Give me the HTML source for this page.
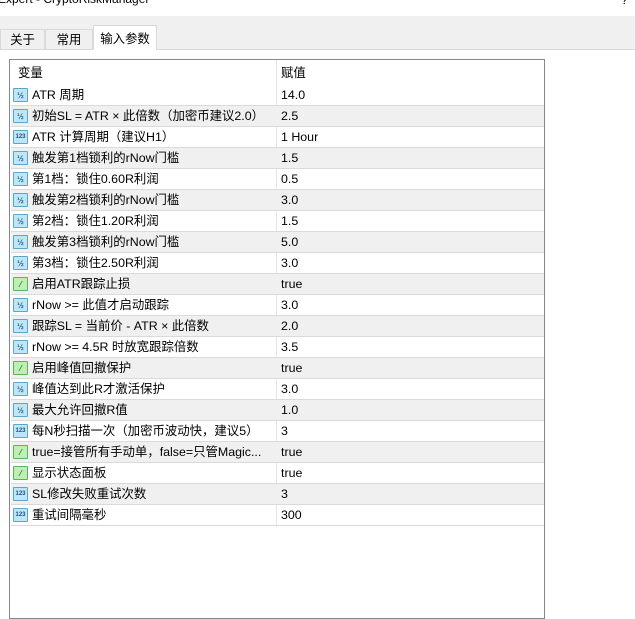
<!DOCTYPE html><html><head><meta charset="utf-8"><style>
body{margin:0;width:635px;height:610px;overflow:hidden;background:#fff;font-family:"Liberation Sans","Noto Sans CJK SC",sans-serif;font-size:12.4px;color:#000;position:relative}
.tb{position:absolute;left:0;top:16px;width:635px;height:33px;background:#f0f0f0;border-bottom:1px solid #d9d9d9}
.tab{position:absolute;top:29px;height:20px;border:1px solid #d9d9d9;border-bottom:none;background:#f0f0f0;line-height:20px;text-align:center;box-sizing:border-box}
.sel{top:25px;height:25px;background:#fff;line-height:26px}
.tbl{position:absolute;left:9px;top:59px;width:536px;height:560px;border:1px solid #828790;box-sizing:border-box}
.col{position:absolute;left:266px;top:0;width:1px;height:467px;background:#e5e5e5}
.row{position:absolute;left:1px;width:533px;height:21px;border-bottom:1px solid #dadada;box-sizing:border-box;line-height:20px}
.g{background:#f0f0f0}
.n{position:absolute;left:21px}.v{position:absolute;left:270px}
.ic{position:absolute;left:2px;top:3px;width:15px;height:14px;border-radius:1px;font-size:8px;line-height:13px;text-align:center;box-sizing:border-box;font-weight:bold}
.d{background:#bfe6f5;border:1px solid #5aa7c7;color:#1d5f8a}
.i{background:#bfe6f5;border:1px solid #5aa7c7;color:#1d4f8a;font-size:6px}
.b{background:#bfeeb5;border:1px solid #5cb25a;color:#2a7a2a}
.hd{position:absolute;left:1px;top:0;width:533px;height:25px;line-height:26px}
</style></head><body>
<div style="position:absolute;left:-2px;top:-8px;font-size:12px">Expert - CryptoRiskManager</div>
<div style="position:absolute;left:621px;top:-7px">?</div>
<div class="tb"></div>
<div class="tab" style="left:0;width:45px">关于</div>
<div class="tab" style="left:45px;width:48px">常用</div>
<div class="tab sel" style="left:93px;width:64px">输入参数</div>
<div class="tbl">
<div class="col"></div>
<div class="hd"><span style="position:absolute;left:7px">变量</span><span style="position:absolute;left:270px">赋值</span></div>
<div style="position:absolute;left:0;top:25px;width:534px">
<div class="row" style="top:0"><span class="ic d">½</span><span class="n">ATR 周期</span><span class="v">14.0</span></div>
<div class="row g" style="top:21px"><span class="ic d">½</span><span class="n">初始SL = ATR × 此倍数（加密币建议2.0）</span><span class="v">2.5</span></div>
<div class="row" style="top:42px"><span class="ic i">123</span><span class="n">ATR 计算周期（建议H1）</span><span class="v">1 Hour</span></div>
<div class="row g" style="top:63px"><span class="ic d">½</span><span class="n">触发第1档锁利的rNow门槛</span><span class="v">1.5</span></div>
<div class="row" style="top:84px"><span class="ic d">½</span><span class="n">第1档：锁住0.60R利润</span><span class="v">0.5</span></div>
<div class="row g" style="top:105px"><span class="ic d">½</span><span class="n">触发第2档锁利的rNow门槛</span><span class="v">3.0</span></div>
<div class="row" style="top:126px"><span class="ic d">½</span><span class="n">第2档：锁住1.20R利润</span><span class="v">1.5</span></div>
<div class="row g" style="top:147px"><span class="ic d">½</span><span class="n">触发第3档锁利的rNow门槛</span><span class="v">5.0</span></div>
<div class="row" style="top:168px"><span class="ic d">½</span><span class="n">第3档：锁住2.50R利润</span><span class="v">3.0</span></div>
<div class="row g" style="top:189px"><span class="ic b">⁄</span><span class="n">启用ATR跟踪止损</span><span class="v">true</span></div>
<div class="row" style="top:210px"><span class="ic d">½</span><span class="n">rNow &gt;= 此值才启动跟踪</span><span class="v">3.0</span></div>
<div class="row g" style="top:231px"><span class="ic d">½</span><span class="n">跟踪SL = 当前价 - ATR × 此倍数</span><span class="v">2.0</span></div>
<div class="row" style="top:252px"><span class="ic d">½</span><span class="n">rNow &gt;= 4.5R 时放宽跟踪倍数</span><span class="v">3.5</span></div>
<div class="row g" style="top:273px"><span class="ic b">⁄</span><span class="n">启用峰值回撤保护</span><span class="v">true</span></div>
<div class="row" style="top:294px"><span class="ic d">½</span><span class="n">峰值达到此R才激活保护</span><span class="v">3.0</span></div>
<div class="row g" style="top:315px"><span class="ic d">½</span><span class="n">最大允许回撤R值</span><span class="v">1.0</span></div>
<div class="row" style="top:336px"><span class="ic i">123</span><span class="n">每N秒扫描一次（加密币波动快，建议5）</span><span class="v">3</span></div>
<div class="row g" style="top:357px"><span class="ic b">⁄</span><span class="n">true=接管所有手动单，false=只管Magic...</span><span class="v">true</span></div>
<div class="row" style="top:378px"><span class="ic b">⁄</span><span class="n">显示状态面板</span><span class="v">true</span></div>
<div class="row g" style="top:399px"><span class="ic i">123</span><span class="n">SL修改失败重试次数</span><span class="v">3</span></div>
<div class="row" style="top:420px"><span class="ic i">123</span><span class="n">重试间隔毫秒</span><span class="v">300</span></div>
</div></div>
</body></html>
